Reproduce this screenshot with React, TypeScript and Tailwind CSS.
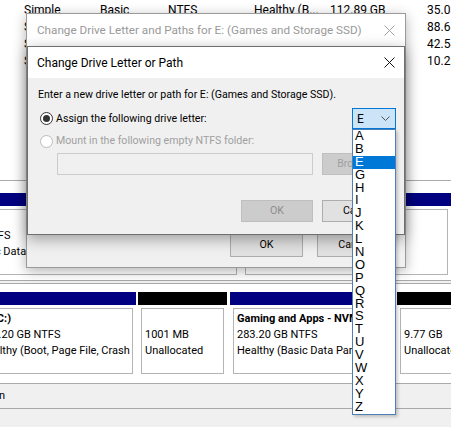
import React from 'react';

const UI = "font-['Roboto','Noto_Sans',sans-serif]";

const volumes = [
  { layout: 'Simple', type: 'Basic', fs: 'NTFS', status: 'Healthy (B...', cap: '112.89 GB', free: '35.03 GB' },
  { layout: 'Simple', type: 'Basic', fs: 'NTFS', status: 'Healthy (B...', cap: '283.20 GB', free: '88.68 GB' },
  { layout: 'Simple', type: 'Basic', fs: 'NTFS', status: 'Healthy (P...', cap: '465.76 GB', free: '42.54 GB' },
  { layout: 'Simple', type: 'Basic', fs: 'NTFS', status: 'Healthy (B...', cap: '119.20 GB', free: '10.22 GB' },
];

const letters = ['A', 'B', 'E', 'G', 'H', 'I', 'J', 'K', 'L', 'N', 'O', 'P', 'Q', 'R', 'S', 'T', 'U', 'V', 'W', 'X', 'Y', 'Z'];

function CloseX({ color }: { color: string }) {
  return (
    <svg width="11" height="11" viewBox="0 0 11 11" className="shrink-0">
      <path d="M0.5 0.5 L10.5 10.5 M10.5 0.5 L0.5 10.5" stroke={color} strokeWidth="1" fill="none" />
    </svg>
  );
}

type Part = {
  bar: string;
  cls: string;
  name?: string;
  nameCls?: string;
  size?: string;
  status?: string;
};

function Partition({ p }: { p: Part }) {
  return (
    <div className={`flex flex-col shrink-0 ${p.cls}`}>
      <div className={`h-[13px] ${p.bar}`} />
      <div className="h-[72px] bg-white p-[3px]">
        <div className="h-full border border-[#b4b4b4] overflow-hidden whitespace-nowrap pl-[3px] pt-[2px] leading-[16px] text-[11px]">
          <div className={`font-bold h-[16px] ${p.nameCls ?? ''}`}>{p.name}</div>
          <div>{p.size}</div>
          <div>{p.status}</div>
        </div>
      </div>
    </div>
  );
}

export default function App() {
  const disk1: Part[] = [
    { bar: 'bg-[#000080]', cls: 'ml-[-77px] w-[317px]', name: 'Storage (E:)', size: '465.76 GB NTFS', status: 'Healthy (Basic Data Partition)' },
    { bar: 'bg-[#000080]', cls: 'flex-1 ml-[2px]', name: 'Backup (F:)', size: '931.51 GB NTFS', status: 'Healthy (Basic Data Partition)' },
  ];
  const disk2: Part[] = [
    { bar: 'bg-[#000080]', cls: 'ml-[-27px] w-[163px]', name: '(C:)', nameCls: 'pl-[13px]', size: '119.20 GB NTFS', status: 'Healthy (Boot, Page File, Crash Dump, Primary Partition)' },
    { bar: 'bg-black', cls: 'ml-[2px] w-[89px]', name: '', size: '1001 MB', status: 'Unallocated' },
    { bar: 'bg-[#000080]', cls: 'ml-[3px] w-[165px]', name: 'Gaming and Apps - NVMe (D:)', size: '283.20 GB NTFS', status: 'Healthy (Basic Data Partition)' },
    { bar: 'bg-black', cls: 'ml-[2px] flex-1', name: '', size: '9.77 GB', status: 'Unallocated' },
  ];

  return (
    <div className={`relative w-[451px] h-[427px] overflow-hidden bg-white text-[12px] text-black ${UI}`}>
      {/* volume list */}
      <div className="h-[180px] pt-[1px]">
        {volumes.map((v, i) => (
          <div key={i} className="flex h-[17px] items-center pl-[24px] whitespace-nowrap">
            <div className="w-[76px] shrink-0">{v.layout}</div>
            <div className="w-[68px] shrink-0">{v.type}</div>
            <div className="w-[86px] shrink-0">{v.fs}</div>
            <div className="w-[76px] shrink-0">{v.status}</div>
            <div className="w-[97px] shrink-0">{v.cap}</div>
            <div className="shrink-0">{v.free}</div>
          </div>
        ))}
      </div>

      {/* disk map */}
      <div className="border-t border-[#ababab]">
        <div className="pt-[12px] flex">
          {disk1.map((p, i) => (
            <Partition key={i} p={p} />
          ))}
        </div>
        <div className="h-[2px]" />
        <div className="h-[4px] border-y border-[#a9a9a9] bg-[#f0f0f0]" />
        <div className="pt-[8px] flex">
          {disk2.map((p, i) => (
            <Partition key={i} p={p} />
          ))}
        </div>
        <div className="h-[6px]" />
        <div className="h-[25px] border-t border-[#a9a9a9] bg-[#f0f0f0] flex items-center whitespace-nowrap text-[11px]">
          <span className="ml-[-95px] w-[100px] text-right">Primary partition</span>
        </div>
        <div className="h-[30px] border-t border-[#a9a9a9] bg-[#f0f0f0]" />
      </div>

      {/* outer dialog (inactive) */}
      <div className="absolute left-[26px] top-[13px] w-[380px] h-[255px] border border-[#9a9a9a] bg-[#f0f0f0] shadow-[0_3px_12px_rgba(0,0,0,0.3)] flex flex-col">
        <div className="h-[33px] bg-white flex items-center pl-[10px] pr-[10px] whitespace-nowrap text-[#999999] text-[11.7px]">
          <span className="flex-1">Change Drive Letter and Paths for E: (Games and Storage SSD)</span>
          <CloseX color="#a0a0a0" />
        </div>
        <div className="flex-1 flex items-end justify-end gap-[14px] pr-[13px] pb-[10px] text-[10.7px]">
          <button className="w-[73px] h-[23px] bg-[#e1e1e1] border border-[#adadad]">OK</button>
          <button className="w-[75px] h-[23px] bg-[#e1e1e1] border border-[#adadad]">Cancel</button>
        </div>
      </div>

      {/* inner dialog (active) */}
      <div className="absolute left-[27px] top-[46px] w-[378px] h-[189px] border border-[#6f6f6f] bg-[#f0f0f0] shadow-[0_4px_14px_rgba(0,0,0,0.35)] flex flex-col">
        <div className="h-[31px] bg-white flex items-center pl-[9px] pr-[9px] whitespace-nowrap text-[12px]">
          <span className="flex-1">Change Drive Letter or Path</span>
          <CloseX color="#111111" />
        </div>
        <div className="flex-1 pl-[10px] pr-[8px] pt-[9px] text-[10.6px]">
          <div className="h-[16px] leading-[16px] whitespace-nowrap">
            Enter a new drive letter or path for E: (Games and Storage SSD).
          </div>
          <div className="mt-[5px] h-[21px] flex items-center">
            <div className="ml-[2px] w-[13px] h-[13px] rounded-full border border-[#333333] bg-white flex items-center justify-center">
              <div className="w-[7px] h-[7px] rounded-full bg-[#333333]" />
            </div>
            <span className="ml-[3px] whitespace-nowrap">Assign the following drive letter:</span>
            <div className="ml-auto w-[44px] h-[21px] border border-[#0078d7] bg-[#cce4f7] flex items-center pl-[4px] pr-[5px] text-[12px]">
              <span className="flex-1">E</span>
              <svg width="9" height="5" viewBox="0 0 9 5">
                <path d="M0.5 0.5 L4.5 4.5 L8.5 0.5" stroke="#555555" strokeWidth="1" fill="none" />
              </svg>
            </div>
          </div>
          <div className="mt-[4px] h-[16px] flex items-center">
            <div className="ml-[2px] w-[13px] h-[13px] rounded-full border border-[#bcbcbc] bg-white" />
            <span className="ml-[3px] whitespace-nowrap text-[#a0a0a0]">Mount in the following empty NTFS folder:</span>
          </div>
          <div className="mt-[4px] flex justify-end gap-[9px]">
            <div className="w-[256px] h-[22px] border border-[#cccccc] bg-[#f0f0f0]" />
            <button className="w-[74px] h-[22px] bg-[#cccccc] border border-[#bfbfbf] text-[#a0a0a0]">Browse...</button>
          </div>
          <div className="mt-[25px] flex justify-end gap-[9px]">
            <button className="w-[72px] h-[22px] bg-[#cccccc] border border-[#bfbfbf] text-[#8c8c8c]">OK</button>
            <button className="w-[74px] h-[22px] bg-[#e1e1e1] border border-[#adadad]">Cancel</button>
          </div>
        </div>
      </div>

      {/* open drive letter list */}
      <div className="absolute left-[352px] top-[129px] w-[44px] border border-[#4f7fb8] bg-white shadow-[2px_2px_3px_rgba(0,0,0,0.2)] font-['Liberation_Sans',sans-serif] text-[13px]">
        {letters.map((l) => (
          <div
            key={l}
            className={`h-[12.9px] leading-[12.9px] pl-[2px] ${l === 'E' ? 'bg-[#0078d7] text-white' : ''}`}
          >
            {l}
          </div>
        ))}
      </div>
    </div>
  );
}
